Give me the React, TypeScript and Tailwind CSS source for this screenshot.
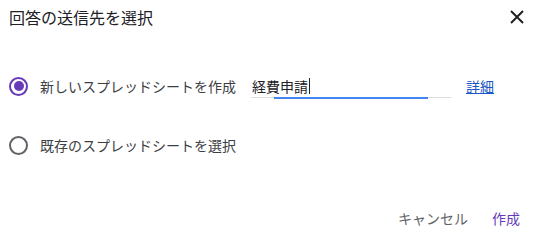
import React from "react";

export default function App() {
  const font = { fontFamily: '"Noto Sans CJK JP", "Noto Sans", sans-serif' };
  return (
    <div className="w-[537px] h-[244px] bg-white flex flex-col overflow-hidden" style={font}>
      <div className="flex items-center h-[34px] pl-[9px] pr-[13px]">
        <div className="flex-1 text-[16px] text-[#202124] leading-none">回答の送信先を選択</div>
        <svg width="14" height="14" viewBox="0 0 14 14">
          <path d="M1 1 L13 13 M13 1 L1 13" stroke="#202124" strokeWidth="2" />
        </svg>
      </div>
      <div className="flex items-center h-[36px] mt-[34px] pl-[9px]">
        <div className="w-[19px] h-[19px] rounded-full border-2 border-[#673ab7] flex items-center justify-center">
          <div className="w-[10px] h-[10px] rounded-full bg-[#673ab7]" />
        </div>
        <div className="ml-[12px] text-[14px] text-[#3c4043] leading-none">新しいスプレッドシートを作成</div>
        <div className="ml-[15px] w-[200px] relative h-[36px] flex items-center">
          <div className="text-[14px] text-[#202124] leading-none flex items-center">
            <span className="pl-[1px]">経費申請</span>
            <span className="w-px h-[16px] bg-[#202124] ml-[1px]" />
          </div>
          <div className="absolute left-0 right-0 bottom-[6px] h-px bg-[#dadce0]" />
          <div className="absolute left-[23px] w-[154px] bottom-[5px] h-[2px] bg-[#4285f4]" />
        </div>
        <div className="ml-[15px] text-[14px] text-[#1a57c4] underline leading-none">詳細</div>
      </div>
      <div className="flex items-center h-[36px] mt-[23px] pl-[9px]">
        <div className="w-[19px] h-[19px] rounded-full border-2 border-[#5f6368]" />
        <div className="ml-[12px] text-[14px] text-[#3c4043] leading-none">既存のスプレッドシートを選択</div>
      </div>
      <div className="flex items-center justify-end h-[36px] mt-[37px] pr-[17px]">
        <div className="text-[14px] text-[#5f6368] leading-none">キャンセル</div>
        <div className="ml-[24px] text-[14px] text-[#673ab7] leading-none">作成</div>
      </div>
    </div>
  );
}
